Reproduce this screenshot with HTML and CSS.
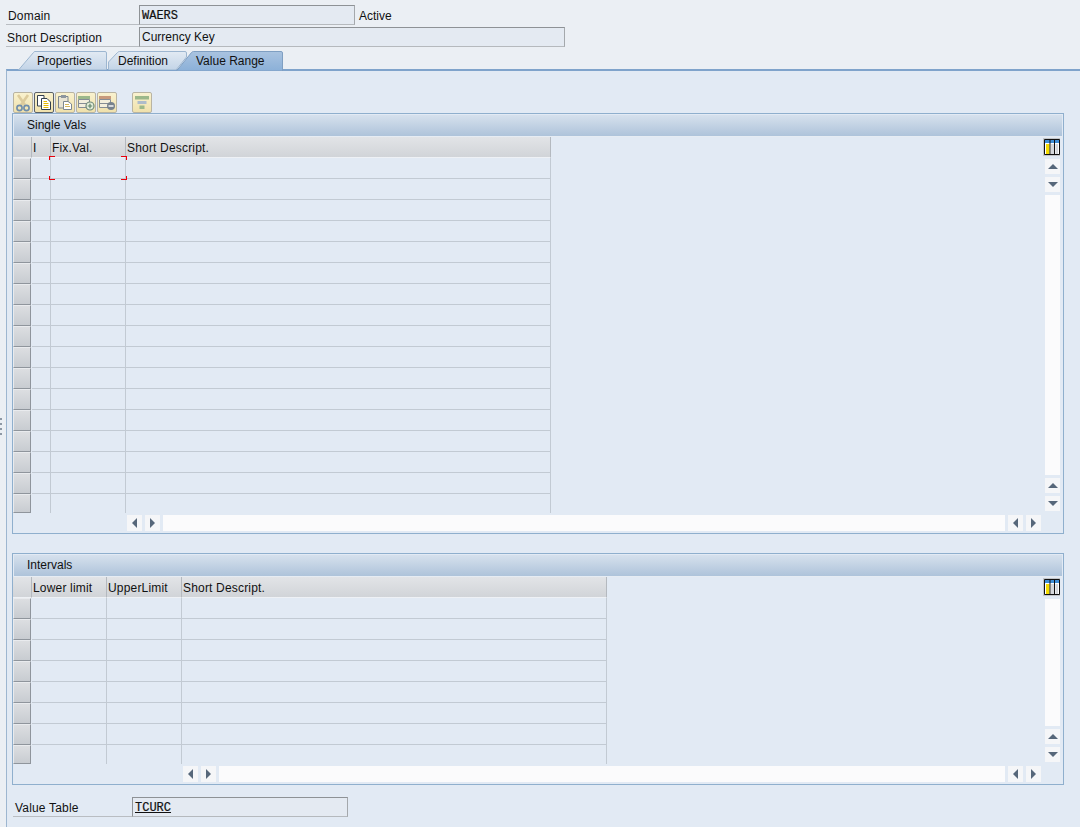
FILE: index.html
```html
<!DOCTYPE html>
<html lang="en">
<head>
  <meta charset="UTF-8" />
  <title>Domain WAERS - Value Range</title>
  <link rel="stylesheet" href="styles.css">
</head>
<body>
  <div class="sash"></div>
  <div class="head">
    <div class="field-row">
      <span class="label label-domain">Domain</span>
      <span class="field field-short mono">WAERS</span>
      <span class="status">Active</span>
    </div>
    <div class="field-row">
      <span class="label">Short Description</span>
      <span class="field field-long">Currency Key</span>
    </div>
  </div>

  <div class="tabs">
    <div class="tab tab-properties">
      <svg class="tab-shape" width="90" height="19" viewBox="0 0 90 19"><defs><linearGradient id="tabl" x1="0" y1="0" x2="0" y2="1"><stop offset="0" stop-color="#e2eaf3"/><stop offset="1" stop-color="#c3d4e7"/></linearGradient></defs><path d="M.5 19 15.500 1.500Q16 .5 17 .5H87Q88.500 .5 88.500 2V19Z" fill="url(#tabl)" stroke="#9db6d0"/></svg>
      <span class="tab-text">Properties</span>
    </div>
    <div class="tab tab-definition">
      <svg class="tab-shape" width="80" height="19" viewBox="0 0 80 19"><path d="M.5 19V11L9.500 1.500Q10.500 .5 11.500 .5H77Q78.500 .5 78.500 2V6L68 19Z" fill="url(#tabl)" stroke="#9db6d0"/></svg>
      <span class="tab-text">Definition</span>
    </div>
    <div class="tab tab-value">
      <svg class="tab-shape" width="108" height="20" viewBox="0 0 108 20"><defs><linearGradient id="tabg" x1="0" y1="0" x2="0" y2="1"><stop offset="0" stop-color="#a9c3e0"/><stop offset="1" stop-color="#8bb0d8"/></linearGradient></defs><path d="M.5 20 15.500 1.500Q16.500 .5 17.500 .5H105Q106.500 .5 106.500 2V20Z" fill="url(#tabg)" stroke="#7f9fc2"/></svg>
      <span class="tab-text">Value Range</span>
    </div>
  </div>

  <div class="panel">
    <div class="toolbar">
      <button class="tool" title="Cut"><svg width="16" height="18" viewBox="0 0 16 18"><path d="M3 1 10 11M13 1 6 11" stroke="#dccb9c" stroke-width="2.600" fill="none"/><circle cx="4.500" cy="14" r="2.600" fill="none" stroke="#6f8daa" stroke-width="1.600"/><circle cx="11.500" cy="14" r="2.600" fill="none" stroke="#6f8daa" stroke-width="1.600"/></svg></button>
      <button class="tool tool-focus" title="Copy"><svg width="16" height="17" viewBox="0 0 16 17"><path d="M1.500 1.500H8V12H1.500Z" fill="#fff" stroke="#33404f"/><path d="M5.500 4.500H11L14.500 8V15.500H5.500Z" fill="#fff" stroke="#33404f"/><path d="M7.500 7.500H11M7.500 9.500H12.500M7.500 11.500H12.500M7.500 13.500H12.500" stroke="#e8b800"/></svg></button>
      <button class="tool" title="Paste"><svg width="16" height="17" viewBox="0 0 16 17"><path d="M1.500 2.500H11V14H1.500Z" fill="#e8e4d4" stroke="#7d8791"/><path d="M4 1H9V4H4Z" fill="#8d969e"/><path d="M6.500 7.500H11L14.500 10V15.500H6.500Z" fill="#fff" stroke="#7d8791"/><path d="M8 10.500H12M8 12.500H13" stroke="#d4b65e"/></svg></button>
      <button class="tool" title="Insert row"><svg width="18" height="17" viewBox="0 0 18 17"><path d="M1 2H13V5H1Z" fill="#9cb88a"/><path d="M1.500 5.500H12.500V13.500H1.500ZM1.500 9.500H12.500" fill="#f3efdd" stroke="#858d95"/><circle cx="13" cy="12" r="4" fill="#e3ecd9" stroke="#6f8a78" stroke-width="1.200"/><path d="M10.800 12H15.200M13 9.800V14.200" stroke="#5f8468" stroke-width="1.200"/></svg></button>
      <button class="tool" title="Delete row"><svg width="18" height="17" viewBox="0 0 18 17"><path d="M1 2H13V5H1Z" fill="#c79a7c"/><path d="M1.500 5.500H12.500V13.500H1.500ZM1.500 9.500H12.500" fill="#f3efdd" stroke="#858d95"/><circle cx="13" cy="12" r="4" fill="#77828d"/><path d="M10.500 12H15.500" stroke="#fff" stroke-width="1.400"/></svg></button>
      <button class="tool tool-apart" title="Filter"><svg width="16" height="16" viewBox="0 0 16 16"><path d="M1 1H15V4.500H1Z" fill="#9cb88a"/><path d="M3.500 6H12.500V9H3.500Z" fill="#aebccb"/><path d="M5.500 10.500H10.500V14H5.500Z" fill="#9cb88a"/></svg></button>
    </div>

    <section class="group group-vals">
      <h2 class="group-title">Single Vals</h2>
      <div class="grid-wrap">
        <div class="focus-cell"></div>
        <table class="grid">
          <colgroup><col class="c-sel"><col class="c-i"><col class="c-fix"><col class="c-desc"></colgroup>
          <thead><tr><th class="sel"></th><th>I</th><th>Fix.Val.</th><th>Short Descript.</th></tr></thead>
          <tbody>
            <tr><td class="sel"><i></i></td><td></td><td></td><td></td></tr>
            <tr><td class="sel"><i></i></td><td></td><td></td><td></td></tr>
            <tr><td class="sel"><i></i></td><td></td><td></td><td></td></tr>
            <tr><td class="sel"><i></i></td><td></td><td></td><td></td></tr>
            <tr><td class="sel"><i></i></td><td></td><td></td><td></td></tr>
            <tr><td class="sel"><i></i></td><td></td><td></td><td></td></tr>
            <tr><td class="sel"><i></i></td><td></td><td></td><td></td></tr>
            <tr><td class="sel"><i></i></td><td></td><td></td><td></td></tr>
            <tr><td class="sel"><i></i></td><td></td><td></td><td></td></tr>
            <tr><td class="sel"><i></i></td><td></td><td></td><td></td></tr>
            <tr><td class="sel"><i></i></td><td></td><td></td><td></td></tr>
            <tr><td class="sel"><i></i></td><td></td><td></td><td></td></tr>
            <tr><td class="sel"><i></i></td><td></td><td></td><td></td></tr>
            <tr><td class="sel"><i></i></td><td></td><td></td><td></td></tr>
            <tr><td class="sel"><i></i></td><td></td><td></td><td></td></tr>
            <tr><td class="sel"><i></i></td><td></td><td></td><td></td></tr>
            <tr><td class="sel"><i></i></td><td></td><td></td><td></td></tr>
          </tbody>
        </table>
        <div class="vbar">
          <div class="col-toggle"><svg width="16" height="16" viewBox="0 0 16 16"><path d="M.5.5H15.500V15.500H.5Z" fill="#fff" stroke="#111"/><path d="M1 1H15V4H1Z" fill="#3f8fd8"/><path d="M2 5H5.500V15H2Z" fill="#f5dc00"/><path d="M7 5H10V15H7ZM11.500 5H14V15H11.500Z" fill="#d5d8dc"/><path d="M6 1V15M10.500 1V15" stroke="#111"/></svg></div>
          <div class="sb-btn"><b class="arrow-up"></b></div>
          <div class="sb-btn"><b class="arrow-down"></b></div>
          <div class="sb-track"></div>
          <div class="sb-btn"><b class="arrow-up"></b></div>
          <div class="sb-btn"><b class="arrow-down"></b></div>
        </div>
      </div>
      <div class="hbar hbar-vals">
        <div class="sb-btn"><b class="arrow-left"></b></div>
        <div class="sb-btn"><b class="arrow-right"></b></div>
        <div class="sb-track"></div>
        <div class="sb-btn"><b class="arrow-left"></b></div>
        <div class="sb-btn"><b class="arrow-right"></b></div>
      </div>
    </section>

    <section class="group group-intervals">
      <h2 class="group-title">Intervals</h2>
      <div class="grid-wrap">
        <table class="grid">
          <colgroup><col class="c-sel"><col class="c-low"><col class="c-up"><col class="c-desc"></colgroup>
          <thead><tr><th class="sel"></th><th>Lower limit</th><th>UpperLimit</th><th>Short Descript.</th></tr></thead>
          <tbody>
            <tr><td class="sel"><i></i></td><td></td><td></td><td></td></tr>
            <tr><td class="sel"><i></i></td><td></td><td></td><td></td></tr>
            <tr><td class="sel"><i></i></td><td></td><td></td><td></td></tr>
            <tr><td class="sel"><i></i></td><td></td><td></td><td></td></tr>
            <tr><td class="sel"><i></i></td><td></td><td></td><td></td></tr>
            <tr><td class="sel"><i></i></td><td></td><td></td><td></td></tr>
            <tr><td class="sel"><i></i></td><td></td><td></td><td></td></tr>
            <tr><td class="sel"><i></i></td><td></td><td></td><td></td></tr>
          </tbody>
        </table>
        <div class="vbar">
          <div class="col-toggle"><svg width="16" height="16" viewBox="0 0 16 16"><path d="M.5.5H15.500V15.500H.5Z" fill="#fff" stroke="#111"/><path d="M1 1H15V4H1Z" fill="#3f8fd8"/><path d="M2 5H5.500V15H2Z" fill="#f5dc00"/><path d="M7 5H10V15H7ZM11.500 5H14V15H11.500Z" fill="#d5d8dc"/><path d="M6 1V15M10.500 1V15" stroke="#111"/></svg></div>
          <div class="sb-track"></div>
          <div class="sb-btn"><b class="arrow-up"></b></div>
          <div class="sb-btn"><b class="arrow-down"></b></div>
        </div>
      </div>
      <div class="hbar hbar-intervals">
        <div class="sb-btn"><b class="arrow-left"></b></div>
        <div class="sb-btn"><b class="arrow-right"></b></div>
        <div class="sb-track"></div>
        <div class="sb-btn"><b class="arrow-left"></b></div>
        <div class="sb-btn"><b class="arrow-right"></b></div>
      </div>
    </section>

    <div class="value-table">
      <span class="label">Value Table</span>
      <span class="field field-table mono"><u>TCURC</u></span>
    </div>
  </div>
</body>
</html>
```

FILE: styles.css
```css
* {
  box-sizing: border-box;
}
html, body {
  height: 100%;
}
body {
  margin: 0;
  background: #ebeff4;
  color: #111;
  font-family: "Liberation Sans", Arial, sans-serif;
  font-size: 12px;
  overflow: hidden;
  display: flex;
  flex-direction: column;
}
.sash {
  position: absolute;
  left: 0;
  top: 418px;
  width: 2px;
  height: 18px;
  background: repeating-linear-gradient(#8d98a5 0 2px, #ebeff4 2px 5px);
}
.head {
  padding: 5px 0 0 6px;
  display: flex;
  flex-direction: column;
  gap: 2px;
}
.field-row {
  display: flex;
  height: 20px;
}
.label {
  width: 133px;
  border-bottom: 1px solid #b9bdc2;
  padding: 3px 0 0 1px;
  line-height: 16px;
  white-space: nowrap;
  letter-spacing: 0.18px;
}
.label-domain {
  padding-left: 2px;
}
.field {
  height: 20px;
  background: #e4eaf2;
  border: 1px solid #a4a8ac;
  border-top-color: #8e9296;
  border-left-color: #8e9296;
  border-bottom-color: #b5b9bd;
  padding: 2px 0 0 2px;
  line-height: 15px;
}
.field-short {
  width: 216px;
}
.field-long {
  width: 426px;
}
.status {
  padding: 3px 0 0 4px;
  line-height: 16px;
}
.mono {
  font-family: "Liberation Mono", "Courier New", monospace;
  font-size: 12px;
  line-height: 17px;
  -webkit-text-stroke: 0.2px #111;
}
.tabs {
  display: flex;
  height: 20px;
  margin-top: 4px;
  position: relative;
  z-index: 1;
}
.tab {
  position: relative;
  height: 19px;
  line-height: 21px;
}
.tab-shape {
  position: absolute;
  left: 0;
  top: 0;
}
.tab-text {
  position: absolute;
  top: 0;
  white-space: nowrap;
}
.tab-properties {
  width: 90px;
  margin-left: 18px;
}
.tab-properties .tab-text {
  left: 19px;
}
.tab-definition {
  width: 80px;
}
.tab-definition .tab-text {
  left: 10px;
}
.tab-value {
  width: 108px;
  height: 20px;
  margin-left: -12px;
}
.tab-value .tab-text {
  left: 20px;
}
.panel {
  flex: 1;
  margin-left: 6px;
  margin-top: -2px;
  background: #e2eaf4;
  border-top: 2px solid #7fa3cb;
  border-left: 1px solid #9db6d0;
  padding: 21px 0 0 5px;
}
.toolbar {
  display: flex;
  height: 21px;
  gap: 1px;
  padding-left: 1px;
}
.tool {
  width: 20px;
  height: 21px;
  padding: 0;
  display: flex;
  align-items: center;
  justify-content: center;
  background: linear-gradient(#f9f2cf, #f0e1ac);
  border: 1px solid #b9b4a2;
  border-radius: 2px;
}
.tool-focus {
  border-color: #5c6268;
}
.tool-apart {
  margin-left: 14px;
}
.group {
  width: 1052px;
  border: 1px solid #8fafcd;
  padding: 1px 1px 0 0;
}
.group-vals {
  height: 421px;
}
.group-intervals {
  height: 232px;
  margin-top: 19px;
}
.group-title {
  margin: 0 0 0 1px;
  height: 22px;
  font-size: 12px;
  font-weight: normal;
  line-height: 20px;
  padding-left: 13px;
  background: linear-gradient(#d6e1ed, #aec3da);
  border-bottom: 1px solid #e6ecf3;
}
.grid-wrap {
  display: flex;
  justify-content: space-between;
  position: relative;
}
.grid {
  border-collapse: separate;
  border-spacing: 0;
  table-layout: fixed;
  width: 538px;
}
.group-intervals .grid {
  width: 594px;
}
.c-sel,
.c-i {
  width: 19px;
}
.c-fix,
.c-low,
.c-up {
  width: 75px;
}
.c-desc {
  width: auto;
}
.grid th {
  height: 21px;
  padding: 1px 0 0 1px;
  font-weight: normal;
  text-align: left;
  letter-spacing: 0.18px;
  background: linear-gradient(#e2e4e7, #d1d4d8);
  border-right: 1px solid #b4b9bf;
  border-bottom: 1px solid #eef1f5;
}
.grid td {
  height: 21px;
  padding: 0;
  border-right: 1px solid #c2cad3;
  border-bottom: 1px solid #c2cad3;
}
.grid tr:last-child td {
  height: 19px;
  border-bottom: 0;
}
.grid td.sel {
  border: 0;
  vertical-align: top;
}
.grid td.sel i {
  display: block;
  height: 21px;
  width: 18px;
  background: linear-gradient(#dcdee1, #c8ccd1);
  border: 1px solid #e9ebee;
  border-right-color: #8f959c;
  border-bottom-color: #8f959c;
}
.grid tr:last-child td.sel i {
  height: 19px;
}
.focus-cell {
  position: absolute;
  left: 36px;
  top: 19px;
  width: 78px;
  height: 24px;
  --c: #e8000c;
  background:
    linear-gradient(var(--c), var(--c)) 0 0 / 6px 1px,
    linear-gradient(var(--c), var(--c)) 0 0 / 1px 4px,
    linear-gradient(var(--c), var(--c)) 100% 0 / 6px 1px,
    linear-gradient(var(--c), var(--c)) 100% 0 / 1px 4px,
    linear-gradient(var(--c), var(--c)) 0 100% / 6px 1px,
    linear-gradient(var(--c), var(--c)) 0 100% / 1px 4px,
    linear-gradient(var(--c), var(--c)) 100% 100% / 6px 1px,
    linear-gradient(var(--c), var(--c)) 100% 100% / 1px 4px;
  background-repeat: no-repeat;
}
.vbar {
  width: 15px;
  margin-right: 2px;
  display: flex;
  flex-direction: column;
  gap: 3px;
  align-items: flex-end;
  padding: 1px 0 2px;
}
.col-toggle {
  width: 17px;
  height: 18px;
  flex: none;
  background: #c2c5c9;
  display: flex;
  justify-content: flex-end;
  padding-top: 1px;
}
.col-toggle svg {
  display: block;
}
.sb-btn {
  flex: none;
  width: 15px;
  height: 15px;
  background: #f5f6f8;
  display: flex;
  align-items: center;
  justify-content: center;
}
.sb-track {
  flex: 1;
  background: #fbfbfc;
}
.vbar .sb-track {
  width: 15px;
}
.hbar {
  display: flex;
  gap: 3px;
  height: 16px;
  margin: 2px 21px 0 0;
}
.hbar .sb-btn {
  height: 16px;
}
.hbar-vals {
  padding-left: 114px;
}
.hbar-intervals {
  padding-left: 170px;
}
.arrow-up,
.arrow-down {
  width: 0;
  height: 0;
  border-left: 5px solid transparent;
  border-right: 5px solid transparent;
}
.arrow-up {
  border-bottom: 5px solid #56677a;
}
.arrow-down {
  border-top: 5px solid #56677a;
}
.arrow-left,
.arrow-right {
  width: 0;
  height: 0;
  border-top: 5px solid transparent;
  border-bottom: 5px solid transparent;
}
.arrow-left {
  border-right: 5px solid #56677a;
}
.arrow-right {
  border-left: 5px solid #56677a;
}
.value-table {
  display: flex;
  height: 20px;
  margin-top: 12px;
  padding-left: 1px;
}
.value-table .label {
  width: 119px;
  padding-left: 2px;
  padding-top: 3px;
}
.field-table {
  width: 216px;
}
```
